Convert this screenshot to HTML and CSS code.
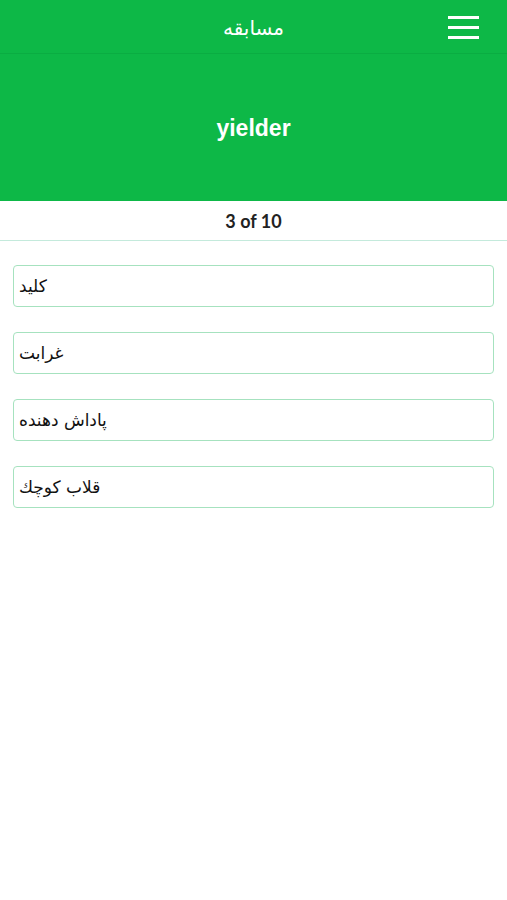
FILE: index.html
```html
<!DOCTYPE html>
<html lang="fa">
<head>
    <meta charset="UTF-8">
    <meta name="viewport" content="width=device-width, initial-scale=1.0">
    <title>مسابقه</title>
    <link rel="stylesheet" href="styles.css">
</head>
<body>
    <header class="topbar">
        <h1 class="topbar-title">مسابقه</h1>
        <button class="menu-btn" aria-label="menu">
            <span></span>
            <span></span>
            <span></span>
        </button>
    </header>

    <div class="question">
        <h2>yielder</h2>
    </div>

    <div class="counter">3 of 10</div>

    <ul class="answers">
        <li class="answer">كليد</li>
        <li class="answer">غرابت</li>
        <li class="answer">پاداش دهنده</li>
        <li class="answer">قلاب كوچك</li>
    </ul>
</body>
</html>
```

FILE: styles.css
```css
* {
    margin: 0;
    padding: 0;
    box-sizing: border-box;
}

body {
    background: #ffffff;
    font-family: 'DejaVu Sans', 'Noto Sans', sans-serif;
}

.topbar {
    position: relative;
    height: 54px;
    background: #0db847;
    border-bottom: 1px solid #0aad42;
    display: flex;
    justify-content: center;
    align-items: center;
}

.topbar-title {
    color: #ffffff;
    font-size: 20px;
    font-weight: normal;
    padding-top: 2px;
}

.menu-btn {
    position: absolute;
    right: 28px;
    top: 16px;
    width: 31px;
    display: flex;
    flex-direction: column;
    gap: 7px;
    background: none;
    border: none;
}

.menu-btn span {
    display: block;
    height: 3px;
    background: #ffffff;
}

.question {
    height: 147px;
    background: #0db847;
    display: flex;
    justify-content: center;
    align-items: center;
}

.question h2 {
    color: #ffffff;
    font-family: 'Liberation Sans', Arial, sans-serif;
    font-size: 23px;
    font-weight: bold;
    padding-top: 1px;
}

.counter {
    height: 40px;
    border-bottom: 1px solid #c4eadc;
    text-align: center;
    line-height: 40px;
    font-family: Lato, sans-serif;
    font-weight: bold;
    font-size: 18px;
    color: #222222;
}

.answers {
    list-style: none;
    padding: 24px 13px 0 13px;
    display: flex;
    flex-direction: column;
    gap: 25px;
}

.answer {
    height: 42px;
    border: 1px solid #a6e2bf;
    border-radius: 4px;
    padding-left: 5px;
    display: flex;
    align-items: center;
    font-size: 17px;
    color: #111111;
}
```
